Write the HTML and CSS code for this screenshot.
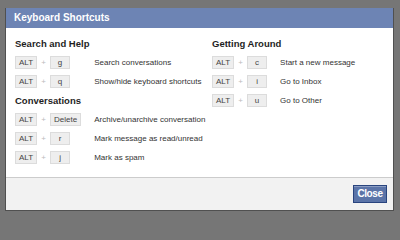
FILE: index.html
```html
<!DOCTYPE html>
<html>
<head>
<meta charset="utf-8">
<title>Keyboard Shortcuts</title>
<link rel="stylesheet" href="styles.css">
</head>
<body>
<div class="dialog">
  <div class="title">Keyboard Shortcuts</div>
  <div class="content">
    <div class="col">
      <div class="heading">Search and Help</div>
      <div class="keys"><span class="key">ALT</span><span class="plus">+</span><span class="key">g</span></div>
      <div class="desc">Search conversations</div>
      <div class="keys"><span class="key">ALT</span><span class="plus">+</span><span class="key">q</span></div>
      <div class="desc">Show/hide keyboard shortcuts</div>
      <div class="heading sub">Conversations</div>
      <div class="keys"><span class="key">ALT</span><span class="plus">+</span><span class="key">Delete</span></div>
      <div class="desc">Archive/unarchive conversation</div>
      <div class="keys"><span class="key">ALT</span><span class="plus">+</span><span class="key">r</span></div>
      <div class="desc">Mark message as read/unread</div>
      <div class="keys"><span class="key">ALT</span><span class="plus">+</span><span class="key">j</span></div>
      <div class="desc">Mark as spam</div>
    </div>
    <div class="col">
      <div class="heading">Getting Around</div>
      <div class="keys"><span class="key">ALT</span><span class="plus">+</span><span class="key">c</span></div>
      <div class="desc">Start a new message</div>
      <div class="keys"><span class="key">ALT</span><span class="plus">+</span><span class="key">i</span></div>
      <div class="desc">Go to Inbox</div>
      <div class="keys"><span class="key">ALT</span><span class="plus">+</span><span class="key">u</span></div>
      <div class="desc">Go to Other</div>
    </div>
  </div>
  <div class="footer"><button class="close">Close</button></div>
</div>
</body>
</html>
```
FILE: styles.css
```css
html, body {
  margin: 0;
  padding: 0;
}
body {
  width: 400px;
  height: 217px;
  overflow: hidden;
  background: #767676;
  font-family: "Liberation Sans", Arial, sans-serif;
}
.dialog {
  margin: 8px 0 0 5px;
  width: 387px;
  border: 1px solid #505050;
  border-top: 0;
}
.title {
  height: 20px;
  line-height: 20px;
  padding-left: 8px;
  background: #6d84b4;
  color: #fff;
  font-size: 10px;
  font-weight: bold;
}
.content {
  height: 149px;
  box-sizing: border-box;
  padding: 9px 0 0 9px;
  background: #fff;
  display: grid;
  grid-template-columns: 197px 1fr;
  align-items: start;
}
.col {
  display: grid;
  grid-template-columns: auto 1fr;
  column-gap: 13px;
  align-content: start;
}
.heading {
  grid-column: 1 / -1;
  height: 17px;
  line-height: 14px;
  font-size: 9.5px;
  font-weight: bold;
  color: #1e1e1e;
}
.heading.sub {
  margin-top: 2px;
}
.keys {
  display: flex;
  align-items: flex-start;
  height: 19px;
  padding-top: 2px;
  box-sizing: border-box;
}
.key {
  box-sizing: border-box;
  min-width: 20px;
  height: 13px;
  line-height: 11px;
  padding: 0 3px;
  border: 1px solid #dcdcdc;
  background: #eeeeee;
  color: #444;
  font-size: 8px;
  text-align: center;
}
.plus {
  width: 13px;
  text-align: center;
  color: #bbb;
  font-size: 8px;
  line-height: 13px;
}
.desc {
  height: 19px;
  box-sizing: border-box;
  padding-top: 2px;
  line-height: 13px;
  font-size: 8px;
  color: #333;
  white-space: nowrap;
}
.footer {
  height: 33px;
  box-sizing: border-box;
  border-top: 1px solid #cccccc;
  background: #f2f2f2;
  display: flex;
  justify-content: flex-end;
  align-items: flex-start;
  padding: 7px 6px 0 0;
}
.close {
  width: 34px;
  height: 18px;
  box-sizing: border-box;
  padding: 0;
  margin: 0;
  background: #5b74a8;
  border: 1px solid #29447e;
  box-shadow: inset 0 1px 0 #8a9cc2;
  color: #fff;
  font-family: inherit;
  font-size: 10px;
  font-weight: bold;
  letter-spacing: -0.4px;
  line-height: 16px;
}
```
